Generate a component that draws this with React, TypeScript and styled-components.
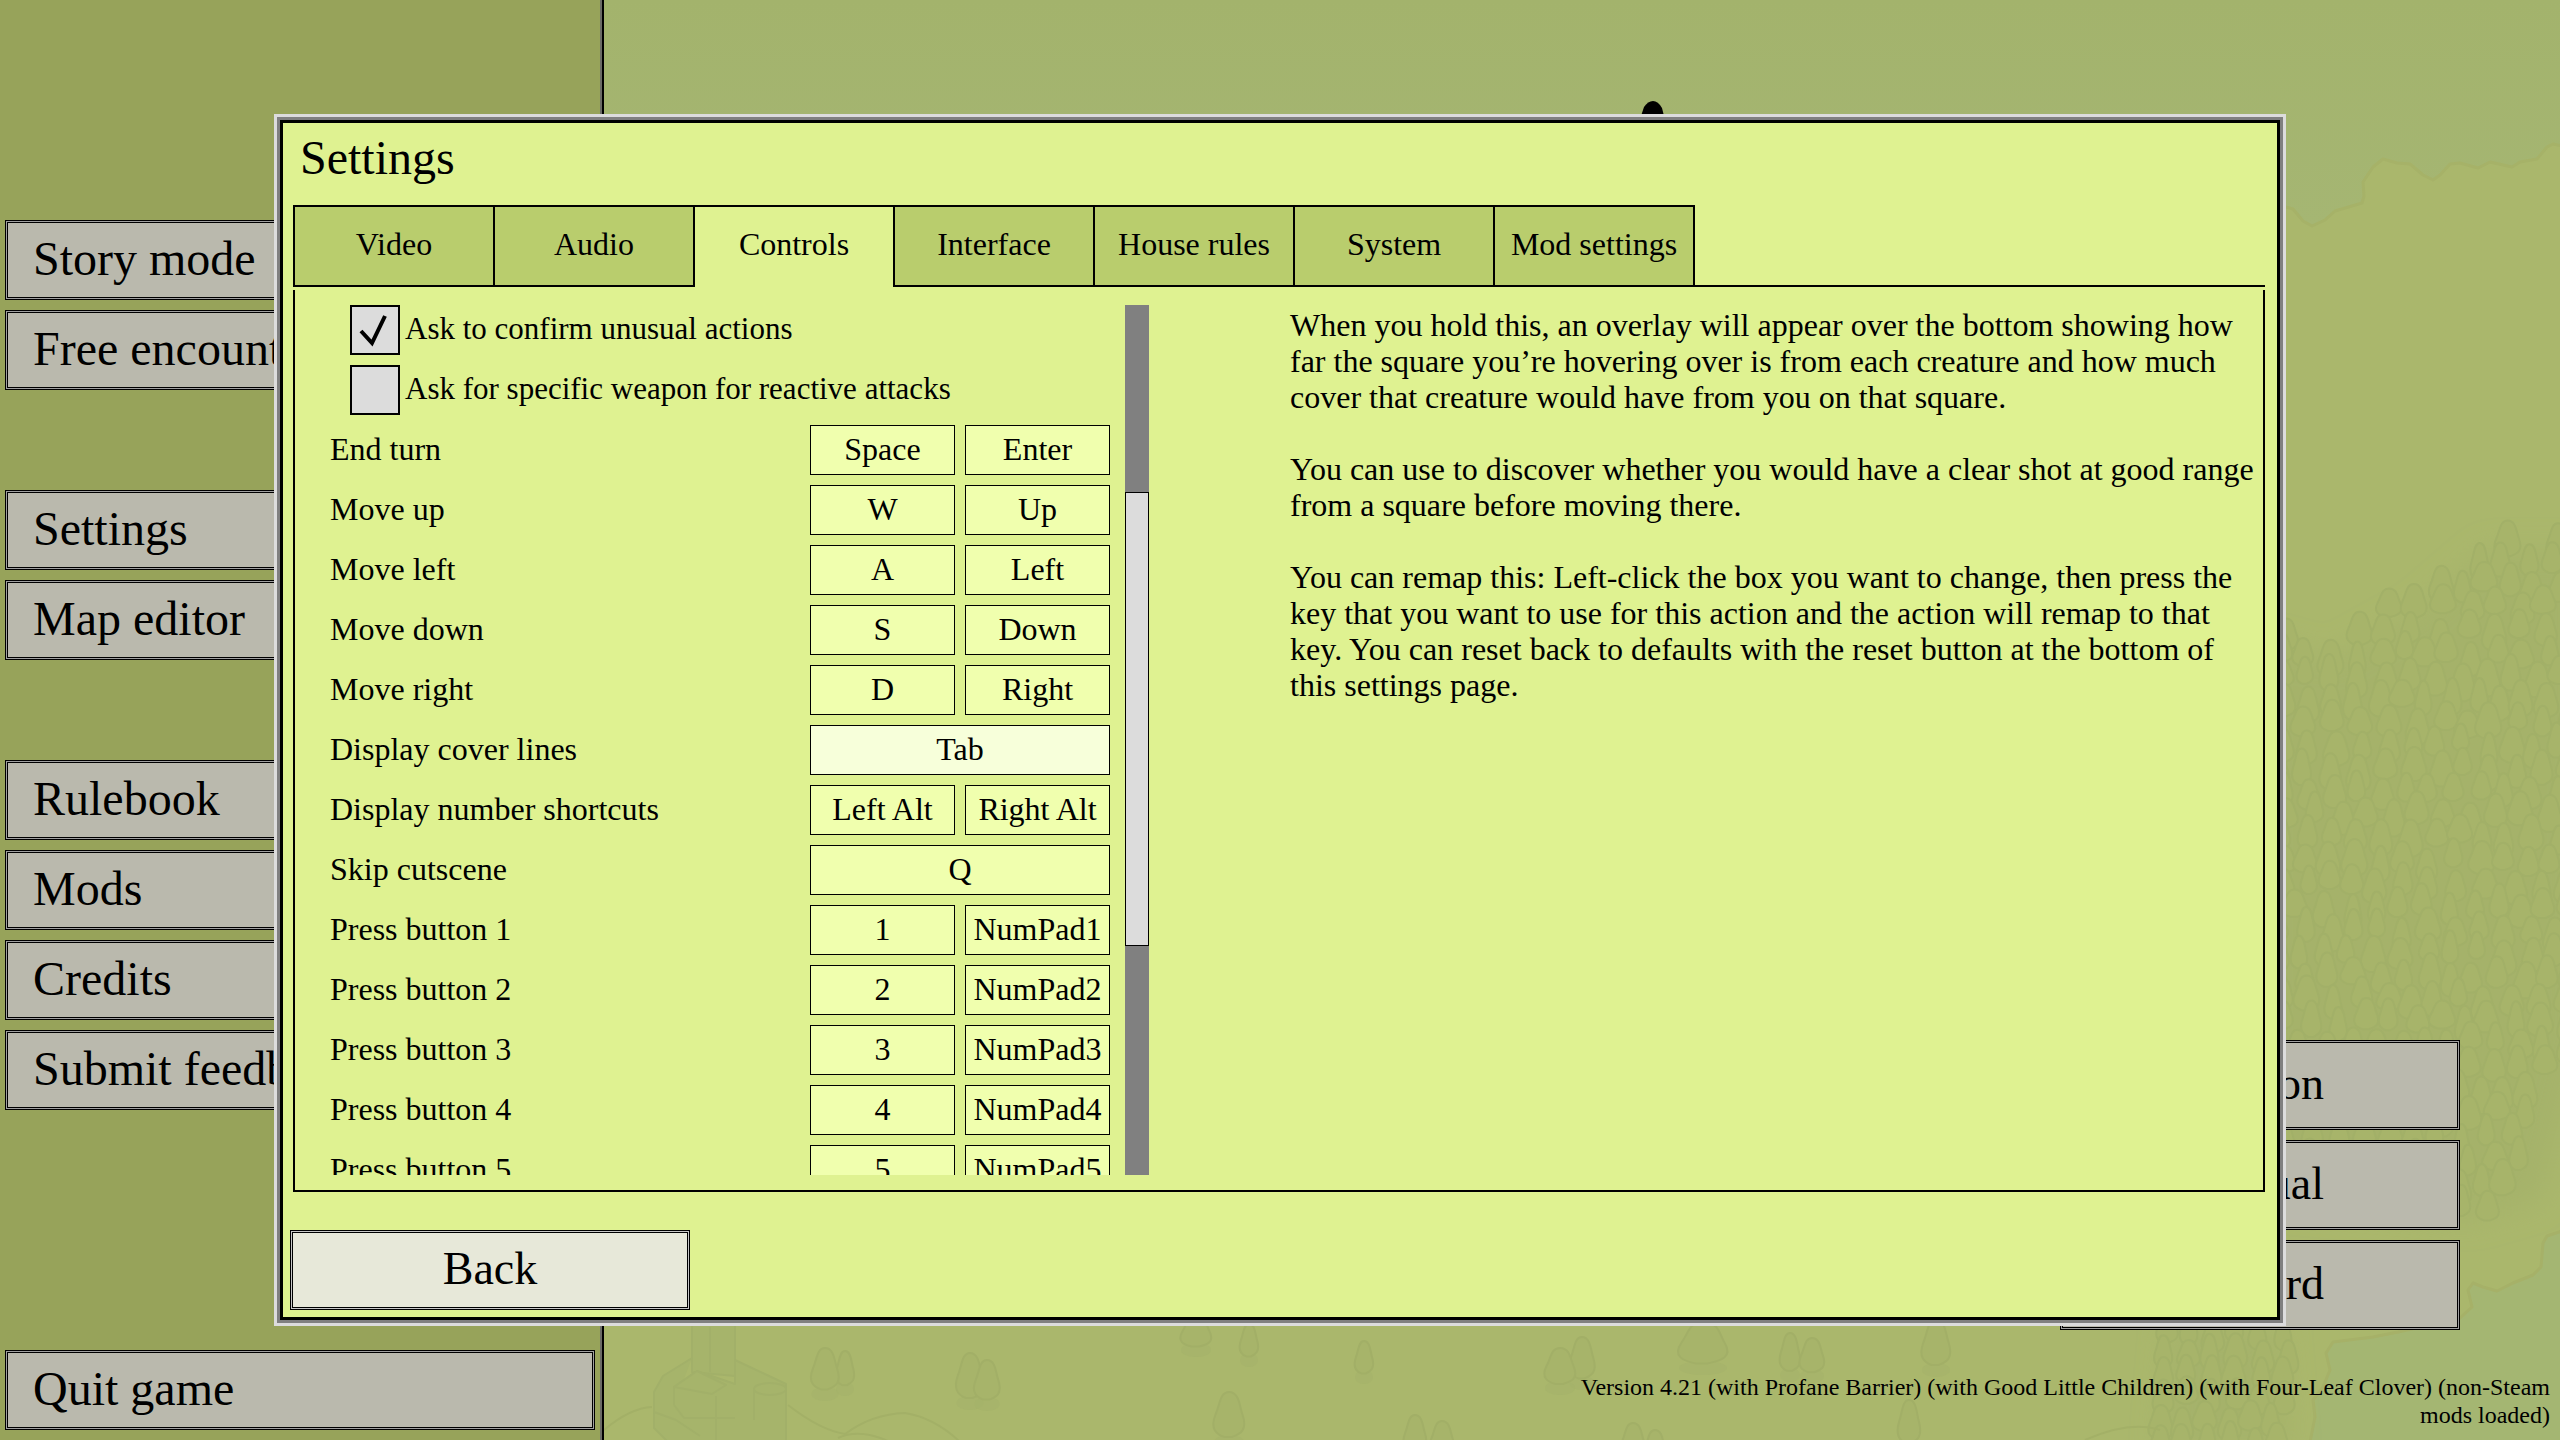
import React, { useState } from "react";
import styled, { createGlobalStyle } from "styled-components";

const SERIF = '"Liberation Serif", "Times New Roman", serif';

const GlobalStyle = createGlobalStyle`
  *, *::before, *::after { box-sizing: border-box; }
  html, body, #root { height: 100%; }
  body { margin: 0; overflow: hidden; background: #aab76c; color: #000; font-family: ${SERIF}; font-size: 32px; }
  h1, p { margin: 0; padding: 0; }
  button { font-family: inherit; color: inherit; cursor: pointer; border-radius: 0; }
`;

const Screen = styled.main`
  position: relative;
  display: flex;
  height: 100vh;
  overflow: hidden;
`;

const MapArt = styled.svg`
  position: absolute;
  inset: 0;
  width: 100%;
  height: 100%;
`;

const Sidebar = styled.nav`
  position: relative;
  display: flex;
  flex-direction: column;
  width: 604px;
  padding: 220px 5px 10px;
  background: #97a35a;
  border-right: 2px solid #000;
  box-shadow: inset -2px 0 0 #6b6c66;
`;

const MenuGroup = styled.div`
  display: flex;
  flex-direction: column;
  gap: 10px;
  width: 590px;
  margin-bottom: 100px;
  &:last-child { margin: auto 0 0; }
`;

const GameButton = styled.button`
  height: 80px;
  padding: 0 27px 4px;
  text-align: left;
  font-size: 48px;
  white-space: nowrap;
  background: #bab9ad;
  border: 1px solid #000;
  box-shadow: inset 0 0 0 1px #a0a0a0, inset 0 0 0 2px #000;
`;

const LinkButton = styled(GameButton)`
  height: 90px;
  padding: 0 135px 4px 0;
  text-align: right;
  font-size: 46px;
`;

const BackButton = styled(GameButton)`
  width: 400px;
  text-align: center;
  font-size: 46px;
  background: #e7e8d9;
  box-shadow: inset 0 0 0 1px #c8c8c8, inset 0 0 0 2px #000;
`;

const Stage = styled.div`
  position: relative;
  display: flex;
  flex: 1;
  flex-direction: column;
  justify-content: flex-end;
  align-items: flex-end;
  padding: 0 10px 11px 0;
`;

const LinkStack = styled.div`
  display: flex;
  flex-direction: column;
  gap: 10px;
  width: 400px;
  margin-right: 90px;
`;

const Version = styled.p`
  width: 974px;
  margin-top: 43px;
  font-size: 24px;
  line-height: 28px;
  text-align: right;
`;

const Overlay = styled.div`
  position: absolute;
  inset: 0;
  display: flex;
  align-items: center;
  justify-content: center;
`;

const Dialog = styled.section`
  display: flex;
  flex-direction: column;
  width: 2012px;
  max-width: 96%;
  padding: 6px 18px 13px 16px;
  background: #dff291;
  border: 3px solid #dcdcdc;
  box-shadow: inset 0 0 0 3px #808080, inset 0 0 0 6px #000;
`;

const Title = styled.h1`
  height: 82px;
  padding: 8px 7px 0;
  font-size: 48px;
  font-weight: 400;
  line-height: 54px;
`;

const TabBar = styled.div`
  display: flex;
  &::after { content: ""; flex: 1; border-bottom: 2px solid #000; }
`;

const Tab = styled.button<{ $active: boolean }>`
  width: 200px;
  height: 82px;
  padding: 0 0 ${(p) => (p.$active ? 5 : 3)}px;
  font-size: 32px;
  background: ${(p) => (p.$active ? "transparent" : "#b9cd6d")};
  border: solid #000;
  border-width: 2px 0 ${(p) => (p.$active ? 0 : 2)}px 2px;
  &:last-child { width: 202px; border-right-width: 2px; }
`;

const Panel = styled.div`
  display: flex;
  margin-top: 3px;
  padding: 15px 5px 15px 35px;
  border: solid #000;
  border-width: 0 2px 2px;
`;

const Settings = styled.div`
  display: flex;
  flex-direction: column;
  gap: 10px;
  width: 780px;
  height: 870px;
  overflow: hidden;
`;

const CheckRow = styled.label`
  display: flex;
  flex: none;
  align-items: center;
  gap: 5px;
  height: 50px;
  padding-left: 20px;
  font-size: 31px;
`;

const CheckCell = styled.span`
  position: relative;
  width: 50px;
  height: 50px;
`;

const CheckInput = styled.input`
  appearance: none;
  width: 50px;
  height: 50px;
  margin: 0;
  background: #dcdcdc;
  border: 2px solid #000;
`;

const Tick = styled.svg`
  position: absolute;
  inset: 0;
  pointer-events: none;
`;

const KeyRow = styled.div`
  display: flex;
  flex: none;
  align-items: center;
  gap: 10px;
  height: 50px;
`;

const KeyName = styled.span`
  flex: 1;
  padding-bottom: 2px;
`;

const KeyButton = styled.button<{ $wide: boolean; $lit: boolean }>`
  width: ${(p) => (p.$wide ? 300 : 145)}px;
  height: 50px;
  padding: 0 0 2px;
  font-size: 32px;
  white-space: nowrap;
  background: ${(p) => (p.$lit ? "#f7ffda" : "#f0ffae")};
  border: 1px solid #000;
`;

const Track = styled.div`
  width: 24px;
  height: 870px;
  margin-left: 15px;
  padding-top: 187px;
  background: #808080;
`;

const Thumb = styled.div`
  height: 454px;
  background: #dcdcdc;
  border: 1px solid #000;
`;

const Help = styled.div`
  display: flex;
  flex: 1;
  flex-direction: column;
  gap: 36px;
  padding: 2px 0 0 141px;
  line-height: 36px;
`;

const Footer = styled.footer`
  display: flex;
  margin: 38px 0 0 -3px;
`;

const menu = [
  ["Story mode", "Free encounter"],
  ["Settings", "Map editor"],
  ["Rulebook", "Mods", "Credits", "Submit feedback"],
  ["Quit game"],
];

const tabs = ["Video", "Audio", "Controls", "Interface", "House rules", "System", "Mod settings"];

const bindings: [string, string[]][] = [
  ["End turn", ["Space", "Enter"]],
  ["Move up", ["W", "Up"]],
  ["Move left", ["A", "Left"]],
  ["Move down", ["S", "Down"]],
  ["Move right", ["D", "Right"]],
  ["Display cover lines", ["Tab"]],
  ["Display number shortcuts", ["Left Alt", "Right Alt"]],
  ["Skip cutscene", ["Q"]],
  ["Press button 1", ["1", "NumPad1"]],
  ["Press button 2", ["2", "NumPad2"]],
  ["Press button 3", ["3", "NumPad3"]],
  ["Press button 4", ["4", "NumPad4"]],
  ["Press button 5", ["5", "NumPad5"]],
];

type Tree = [x: number, top: number, width: number, height: number];

const loneTrees: Tree[] = [
  [845, 1351, 18, 38], [825, 1348, 27, 46], [970, 1353, 27, 50], [987, 1360, 25, 44],
  [1196, 1316, 30, 34], [1249, 1324, 18, 36], [1364, 1341, 18, 36], [1582, 1337, 25, 46],
  [1560, 1348, 30, 40], [1229, 1392, 30, 50], [1415, 1415, 22, 40], [1442, 1421, 24, 40],
  [1703, 1322, 48, 46], [1790, 1333, 20, 42], [1812, 1338, 24, 38], [1936, 1320, 28, 50],
  [1909, 1400, 22, 48], [1633, 1423, 24, 40], [1655, 1430, 22, 40],
];

// Upper edge of the big forest, as [x, y] points from left to right.
const forestEdge = [[2270, 610], [2321, 633], [2354, 600], [2418, 577], [2443, 562], [2466, 552], [2490, 520], [2580, 523]];

function edgeAt(x: number) {
  for (let i = 1; i < forestEdge.length; i++) {
    const [x0, y0] = forestEdge[i - 1];
    const [x1, y1] = forestEdge[i];
    if (x <= x1) return y0 + ((y1 - y0) * (x - x0)) / (x1 - x0);
  }
  return 523;
}

function plantForest(): Tree[] {
  let seed = 7;
  const rand = () => (seed = (seed * 16807) % 2147483647) / 2147483647;
  const trees: Tree[] = [];
  for (let y = 515; y < 1190; y += 23) {
    for (let x = 2274 + rand() * 12; x < 2580; x += 20 + rand() * 10) {
      const top = y + rand() * 12;
      const thin = y > 1060 && x > 2550 - (y - 1060) / 3;
      if (top >= edgeAt(x) && !thin) trees.push([x, top, 16 + rand() * 10, 30 + rand() * 12]);
    }
  }
  for (let y = 1310; y < 1440; y += 22) {
    for (let x = 2160 + rand() * 12; x < 2290; x += 20 + rand() * 8) {
      trees.push([x, y + rand() * 10, 16 + rand() * 8, 30 + rand() * 10]);
    }
  }
  return trees;
}

const forest = plantForest();

function treePath([x, y, w, h]: Tree) {
  const r = w / 2;
  return `M${x} ${y} C${x + r * 0.7} ${y} ${x + r * 0.7} ${y + h * 0.3} ${x + r * 0.9} ${y + h * 0.45} C${x + r * 1.3} ${y + h * 0.8} ${x + r * 0.6} ${y + h * 0.85} ${x + r * 0.2} ${y + h * 0.9} L${x - r * 0.3} ${y + h * 0.9} C${x - r * 0.8} ${y + h * 0.85} ${x - r * 1.3} ${y + h * 0.75} ${x - r * 0.9} ${y + h * 0.45} C${x - r * 0.6} ${y + h * 0.25} ${x - r * 0.6} ${y} ${x} ${y}Z`;
}

const coast =
  "2286 207 2293 209 2303 221 2312 226 2325 220 2335 211 2362 203 2364 196 2363 182 2373 167 2383 159 2397 163 2410 164 2423 175 2433 180 2440 175 2450 164 2460 163 2478 168 2490 162 2512 167 2520 162 2537 159 2547 147 2553 144 2562 146";
const shore =
  "2562 1231 2547 1236 2543 1243 2541 1267 2533 1275 2513 1283 2497 1291 2483 1287 2473 1283 2468 1290 2472 1307 2460 1318 2398 1332 2373 1337 2333 1342 2326 1353 2330 1370 2323 1387 2313 1400 2315 1417 2310 1442";

function WorldMap() {
  return (
    <MapArt viewBox="0 0 2560 1440" preserveAspectRatio="xMaxYMax slice" aria-hidden="true">
      <defs>
        <filter id="soft" x="-20%" y="-20%" width="140%" height="140%">
          <feGaussianBlur stdDeviation="14" />
        </filter>
        <linearGradient id="sea" x1="0" y1="0" x2="0" y2="1">
          <stop offset="0" stopColor="#a3b36c" />
          <stop offset="1" stopColor="#a5b673" />
        </linearGradient>
      </defs>
      <rect width="2560" height="1440" fill="#aab76c" />
      <polygon points={`600 0 600 207 ${coast} 2562 0`} fill="url(#sea)" />
      <polyline points={coast} fill="none" stroke="#a6b268" strokeWidth="3" strokeLinejoin="round" />
      <polygon points={`${shore} 2562 1442`} fill="#a4b672" />
      <polyline points={shore} fill="none" stroke="#a6b168" strokeWidth="3" strokeLinejoin="round" />
      <path
        d="M2260 640 L2330 660 L2420 610 L2490 550 L2580 550 L2580 1040 L2540 1200 L2470 1220 L2260 1200Z M2170 1330 L2280 1330 L2290 1450 L2160 1450Z"
        fill="#a5b26a"
        filter="url(#soft)"
      />
      <g fill="#a7b46a" stroke="#a2b068" strokeWidth="2">
        {forest.map((tree, i) => (
          <path key={i} d={treePath(tree)} />
        ))}
      </g>
      <g>
        {loneTrees.map((tree, i) => (
          <g key={i}>
            <ellipse cx={tree[0]} cy={tree[1] + tree[3]} rx={tree[2] / 2} ry="7" fill="#a4b169" opacity="0.5" />
            <path d={treePath(tree)} fill="#a7b46a" stroke="#a2af67" strokeWidth="2" />
          </g>
        ))}
      </g>
      <g fill="none" stroke="#a3b067" strokeWidth="2">
        <path d="M604 1430 Q630 1408 652 1407 M788 1405 Q820 1430 845 1434 Q872 1414 905 1413 Q935 1418 960 1442 M838 1438 Q860 1428 890 1442 M2085 1440 Q2130 1420 2160 1430" />
      </g>
      <g fill="#a6b46b" stroke="#a2b069" strokeWidth="2" strokeLinejoin="round">
        <path d="M692 1322 V1372 L735 1376 V1322Z" />
        <path d="M692 1358 L663 1376 L654 1392 V1428 L668 1442 H786 V1384 L735 1360 V1384 L697 1371 L674 1387 V1405" />
        <path d="M674 1387 L697 1371 L726 1385 L712 1394Z" />
        <ellipse cx="770" cy="1389" rx="16" ry="6" />
        <path d="M754 1389 V1420 M674 1405 L684 1418 H735 M710 1327 V1372 M716 1396 V1440 M654 1412 L676 1420 L700 1436" fill="none" />
      </g>
      <path d="M1641 116 L1644 107 Q1648 101 1653 101 Q1658 101 1662 108 L1664 116Z" fill="#000" />
    </MapArt>
  );
}

function CheckOption({ label, initial }: { label: string; initial: boolean }) {
  const [on, setOn] = useState(initial);
  return (
    <CheckRow>
      <CheckCell>
        <CheckInput type="checkbox" checked={on} onChange={() => setOn(!on)} />
        {on && (
          <Tick width="50" height="50" viewBox="0 0 50 50" fill="none" stroke="#000" strokeWidth="4">
            <path d="M11 26 L22 38 L35 11" />
          </Tick>
        )}
      </CheckCell>
      <KeyName>{label}</KeyName>
    </CheckRow>
  );
}

export default function App() {
  const [tab, setTab] = useState("Controls");
  return (
    <Screen>
      <GlobalStyle />
      <WorldMap />
      <Sidebar>
        {menu.map((group) => (
          <MenuGroup key={group[0]}>
            {group.map((item) => (
              <GameButton key={item}>{item}</GameButton>
            ))}
          </MenuGroup>
        ))}
      </Sidebar>
      <Stage>
        <LinkStack>
          <LinkButton>Patreon</LinkButton>
          <LinkButton>Manual</LinkButton>
          <LinkButton>Discord</LinkButton>
        </LinkStack>
        <Version>
          Version 4.21 (with Profane Barrier) (with Good Little Children) (with Four-Leaf Clover) (non-Steam mods loaded)
        </Version>
      </Stage>
      <Overlay>
        <Dialog role="dialog" aria-labelledby="settings-title">
          <Title id="settings-title">Settings</Title>
          <TabBar role="tablist">
            {tabs.map((name) => (
              <Tab key={name} role="tab" aria-selected={name === tab} $active={name === tab} onClick={() => setTab(name)}>
                {name}
              </Tab>
            ))}
          </TabBar>
          <Panel role="tabpanel">
            <Settings>
              <CheckOption label="Ask to confirm unusual actions" initial />
              <CheckOption label="Ask for specific weapon for reactive attacks" initial={false} />
              {bindings.map(([name, keys]) => (
                <KeyRow key={name}>
                  <KeyName>{name}</KeyName>
                  {keys.map((k) => (
                    <KeyButton key={k} $wide={keys.length === 1} $lit={k === "Tab"}>
                      {k}
                    </KeyButton>
                  ))}
                </KeyRow>
              ))}
            </Settings>
            <Track>
              <Thumb />
            </Track>
            <Help>
              <p>
                When you hold this, an overlay will appear over the bottom showing how far the square you’re hovering
                over is from each creature and how much cover that creature would have from you on that square.
              </p>
              <p>You can use to discover whether you would have a clear shot at good range from a square before moving there.</p>
              <p>
                You can remap this: Left-click the box you want to change, then press the key that you want to use for
                this action and the action will remap to that key. You can reset back to defaults with the reset button
                at the bottom of this settings page.
              </p>
            </Help>
          </Panel>
          <Footer>
            <BackButton>Back</BackButton>
          </Footer>
        </Dialog>
      </Overlay>
    </Screen>
  );
}
